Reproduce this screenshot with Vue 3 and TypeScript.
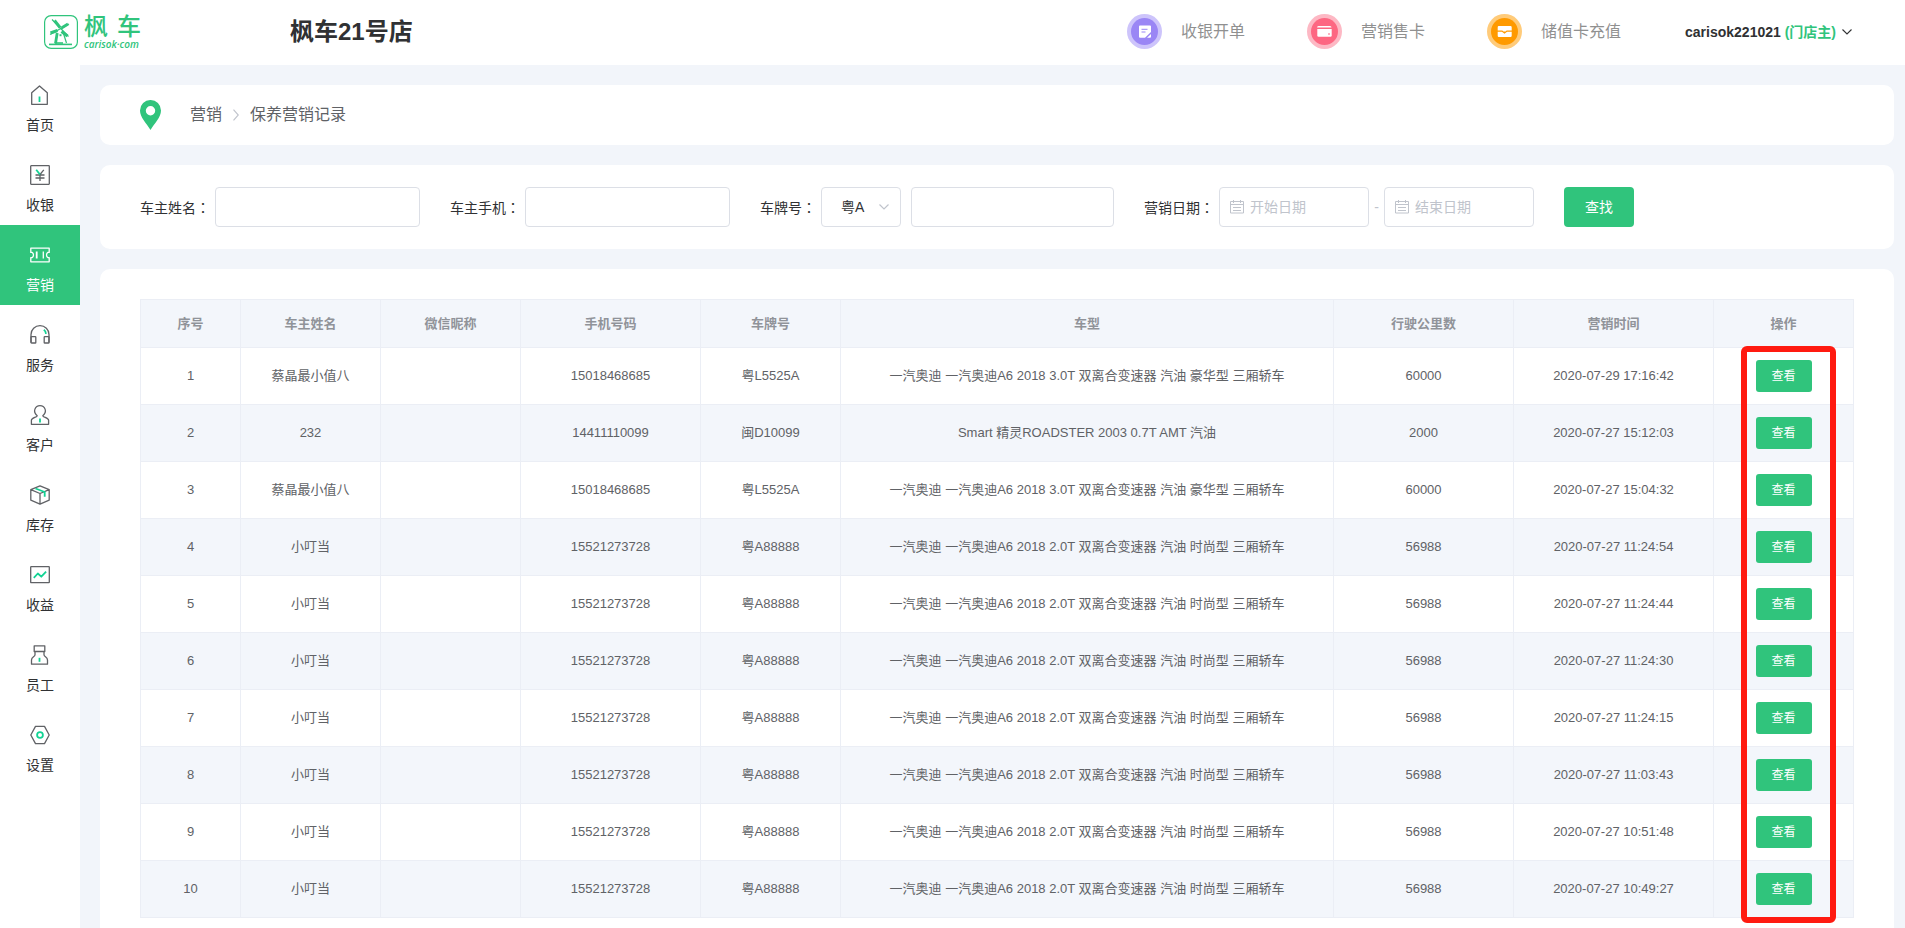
<script setup lang="ts">
import { ref } from 'vue'

interface NavItem {
  key: string
  label: string
}

interface RecordRow {
  owner: string
  nickname: string
  phone: string
  plate: string
  model: string
  mileage: string
  time: string
}

const navItems: NavItem[] = [
  { key: 'home', label: '首页' },
  { key: 'cashier', label: '收银' },
  { key: 'marketing', label: '营销' },
  { key: 'service', label: '服务' },
  { key: 'customer', label: '客户' },
  { key: 'stock', label: '库存' },
  { key: 'income', label: '收益' },
  { key: 'staff', label: '员工' },
  { key: 'settings', label: '设置' },
]
const activeNav = ref('marketing')

const columns: string[] = ['序号', '车主姓名', '微信昵称', '手机号码', '车牌号', '车型', '行驶公里数', '营销时间', '操作']

const luxury = '一汽奥迪 一汽奥迪A6 2018 3.0T 双离合变速器 汽油 豪华型 三厢轿车'
const fashion = '一汽奥迪 一汽奥迪A6 2018 2.0T 双离合变速器 汽油 时尚型 三厢轿车'

const row = (owner: string, phone: string, plate: string, model: string, mileage: string, time: string): RecordRow => ({
  owner,
  nickname: '',
  phone,
  plate,
  model,
  mileage,
  time,
})

const rows: RecordRow[] = [
  row('蔡晶最小值八', '15018468685', '粤L5525A', luxury, '60000', '2020-07-29 17:16:42'),
  row('232', '14411110099', '闽D10099', 'Smart 精灵ROADSTER 2003 0.7T AMT 汽油', '2000', '2020-07-27 15:12:03'),
  row('蔡晶最小值八', '15018468685', '粤L5525A', luxury, '60000', '2020-07-27 15:04:32'),
  ...['11:24:54', '11:24:44', '11:24:30', '11:24:15', '11:03:43', '10:51:48', '10:49:27'].map((t) =>
    row('小叮当', '15521273728', '粤A88888', fashion, '56988', `2020-07-27 ${t}`),
  ),
]

const ownerName = ref('')
const ownerPhone = ref('')
const platePrefix = ref('粤A')
const plateNumber = ref('')
const startDate = ref('')
const endDate = ref('')
</script>

<template>
  <div class="app">
    <header class="topbar">
      <a class="logo" href="#" aria-label="枫车">
        <svg class="logo-mark" viewBox="0 0 34 34" fill="none" stroke="#30c47c">
          <rect x="0.6" y="0.6" width="32.8" height="32.8" rx="6.5" stroke-width="1.2" />
          <path d="M8 4.500L24.500 21.500M6 19.500L25 9" stroke-width="1.200" />
          <path d="M10.500 5.500l5.500 7M17.500 13l6.500-4" stroke-width="3" />
          <path d="M6.500 18l7-2.500M17.500 16.500l6 4.500" stroke-width="3" />
          <path d="M13.200 18l-1.700 10.500" stroke-width="2.800" />
          <path d="M19.500 18.500l3 9.500" stroke-width="1.200" />
          <path d="M15.500 20.200h2" stroke-width="2" />
          <path d="M5 29.400h23" stroke-width="1.600" />
          <path d="M11 28h8" stroke-width="1.600" />
        </svg>
        <span class="logo-words">
          <span class="logo-cn"><span>枫</span><span>车</span></span>
          <span class="logo-en">carisok·com</span>
        </span>
      </a>
      <h1 class="store">枫车21号店</h1>

      <nav class="quick" aria-label="快捷操作">
        <a class="quick-link" href="#">
          <svg class="quick-icon" viewBox="0 0 35 35" fill="none">
            <circle cx="17.5" cy="17.5" r="17.5" fill="#cdc4fb" />
            <circle cx="17.5" cy="17.5" r="13.5" fill="#9a86f5" />
            <path d="M13 11.500h10a1 1 0 0 1 1 1v5.500l-6 5.800h-5a1 1 0 0 1-1-1v-10.300a1 1 0 0 1 1-1z" fill="#fff" />
            <path d="M24 20v2.800a1 1 0 0 1-1 1h-3z" fill="#fff" />
            <path d="M14.500 15.300h6M14.500 18h4" stroke="#9a86f5" stroke-width="1" />
          </svg>
          <span>收银开单</span>
        </a>
        <a class="quick-link" href="#">
          <svg class="quick-icon" viewBox="0 0 35 35" fill="none">
            <circle cx="17.5" cy="17.5" r="17.5" fill="#fdb8c4" />
            <circle cx="17.5" cy="17.5" r="13.5" fill="#fd6782" />
            <path d="M11.500 12h11.500a1.500 1.500 0 0 1 1.500 1.500h-14.500a1.500 1.500 0 0 1 1.500-1.500z" fill="#fff" />
            <path d="M10.300 15h14.400v6.500a1.200 1.200 0 0 1-1.200 1.200h-12a1.200 1.200 0 0 1-1.200-1.200z" fill="#fff" />
            <path d="M21 20h2" stroke="#fd6782" stroke-width="1.200" />
          </svg>
          <span>营销售卡</span>
        </a>
        <a class="quick-link" href="#">
          <svg class="quick-icon" viewBox="0 0 35 35" fill="none">
            <circle cx="17.5" cy="17.5" r="17.5" fill="#ffcb7a" />
            <circle cx="17.5" cy="17.5" r="13.5" fill="#ff9a00" />
            <path d="M12 12h11.500a1.200 1.200 0 0 1 1.200 1.200v3.200h-5l-1.200 1h-2l-1.200-1h-4.600v-3.200a1.200 1.200 0 0 1 1.300-1.200z" fill="#fff" />
            <path d="M10.700 17.800h4.300l2.500 2 2.500-2h4.700v3.900a1.200 1.200 0 0 1-1.200 1.200h-11.500a1.200 1.200 0 0 1-1.300-1.200z" fill="#fff" />
          </svg>
          <span>储值卡充值</span>
        </a>
      </nav>

      <button class="account" type="button">
        <span>carisok221021 <span class="role">(门店主)</span></span>
        <svg class="account-arrow" viewBox="0 0 10 6" fill="none">
          <path d="M0.500 0.500l4.500 4.500 4.500-4.500" stroke="#303133" stroke-width="1.100" />
        </svg>
      </button>
    </header>

    <div class="body">
      <nav class="sidebar" aria-label="主导航">
        <a
          v-for="item in navItems"
          :key="item.key"
          href="#"
          class="nav-item"
          :class="{ active: item.key === activeNav }"
          @click.prevent="activeNav = item.key"
        >
          <svg class="nav-icon" viewBox="0 0 20 20" fill="none" stroke="currentColor" stroke-width="1.300" stroke-linejoin="round">
            <template v-if="item.key === 'home'">
              <path d="M1.700 7.700L9.500 0.900l7.800 6.800v11.600H1.700z" />
              <path class="accent" d="M9.500 11.500v5.500" />
            </template>
            <template v-else-if="item.key === 'cashier'">
              <rect x="0.700" y="0.700" width="18.600" height="18.600" rx="0.500" />
              <path d="M10 9.500v6.500M5.500 10h9M5.500 13h9M10 9.500l3.800-4.700" />
              <path class="accent" d="M6.200 4.800l3.800 4.700" />
            </template>
            <template v-else-if="item.key === 'marketing'">
              <path d="M0.800 3.200h18.400v4.200h-1.200c-2 1-2 4.200 0 5.200h1.200v4.200H0.800v-4.200H2c2-1 2-4.200 0-5.200H0.800z" />
              <path d="M6.700 6.500v7" stroke-width="1.800" />
              <path d="M13.300 6.500v7" />
            </template>
            <template v-else-if="item.key === 'service'">
              <path d="M1 17.500V9.500a9 8.800 0 0 1 18 0v8" />
              <rect x="1" y="11.700" width="4.800" height="6.300" rx="0.600" />
              <rect x="14.200" y="11.700" width="4.800" height="6.300" rx="0.600" />
              <path class="accent" d="M13.800 4.800c1.300.8 2 2 2.200 4" />
            </template>
            <template v-else-if="item.key === 'customer'">
              <path d="M7.200 10.700c-5-4.200-2-10 2.800-10s7.800 5.800 2.800 10c0 1.700 5.800 2 5.800 4.600v4H1.400v-4c0-2.600 5.800-2.900 5.800-4.600z" />
              <path class="accent" d="M10 13.500v4" />
            </template>
            <template v-else-if="item.key === 'stock'">
              <path d="M10 0.900l9.200 3.700v10.600L10 19.100 0.800 15.200V4.600zM0.800 4.600L10 8.500l9.200-3.900M10 8.500v10.600" />
              <path class="accent" d="M5.500 3.500l9.200 3.500v4.800" />
            </template>
            <template v-else-if="item.key === 'income'">
              <rect x="0.700" y="1.700" width="18.600" height="16" rx="0.500" />
              <path class="accent" d="M3.800 12.800l4-4.300 3.500 3.200 4.800-5" />
            </template>
            <template v-else-if="item.key === 'staff'">
              <path d="M4.200 0.800h10.600v5.700H4.200z" />
              <path d="M5 6.500v3.300c0 2-3.500 2.200-3.500 5.200v4.200h16v-4.200c0-3-3.500-3.200-3.500-5.200V6.500" />
              <path class="accent" d="M9.500 12.800v4" />
            </template>
            <template v-else>
              <path d="M5.500 1.400h9L19.200 10l-4.700 8.600h-9L0.800 10z" />
              <circle class="accent" cx="10" cy="10" r="2.900" />
            </template>
          </svg>
          <span>{{ item.label }}</span>
        </a>
      </nav>

      <main class="content">
        <section class="card crumb">
          <svg class="pin" viewBox="0 0 21 30">
            <path d="M10.500 0A10.400 10.400 0 0 0 0 10.400C0 17.500 6.500 23 10.500 30 14.500 23 21 17.500 21 10.400A10.400 10.400 0 0 0 10.500 0zm0 6a4.700 4.700 0 1 1 0 9.400 4.700 4.700 0 0 1 0-9.400z" fill="#30c47c" fill-rule="evenodd" />
          </svg>
          <a href="#">营销</a>
          <svg class="crumb-arrow" viewBox="0 0 6 12" fill="none">
            <path d="M0.500 0.700L5.300 6 0.500 11.300" stroke="#c0c4cc" stroke-width="1.200" />
          </svg>
          <span>保养营销记录</span>
        </section>

        <form class="card filters" @submit.prevent>
          <div class="field">
            <label for="owner-name">车主姓名<span class="colon">：</span></label>
            <input id="owner-name" v-model="ownerName" class="box" type="text" />
          </div>
          <div class="field">
            <label for="owner-phone">车主手机<span class="colon">：</span></label>
            <input id="owner-phone" v-model="ownerPhone" class="box" type="text" />
          </div>
          <div class="field">
            <label for="plate-prefix">车牌号<span class="colon">：</span></label>
            <span class="select-wrap">
              <select id="plate-prefix" v-model="platePrefix" class="box">
                <option>粤A</option>
              </select>
              <svg class="select-arrow" viewBox="0 0 10 6" fill="none">
                <path d="M0.500 0.500l4.500 4.500 4.500-4.500" stroke="#c0c4cc" stroke-width="1.200" />
              </svg>
            </span>
            <input v-model="plateNumber" class="box plate" type="text" aria-label="车牌号码" />
          </div>
          <div class="field">
            <label for="start-date">营销日期<span class="colon">：</span></label>
            <span class="date box">
              <svg class="calendar" viewBox="0 0 14 14" fill="none" stroke="#c0c4cc">
                <path d="M0.500 1.500h13v11.500h-13zM0.500 4.500h13M3.500 0v3M10.500 0v3M3 7.500h8M3 10.500h8" />
              </svg>
              <input id="start-date" v-model="startDate" type="text" placeholder="开始日期" />
            </span>
            <span class="dash">-</span>
            <span class="date box">
              <svg class="calendar" viewBox="0 0 14 14" fill="none" stroke="#c0c4cc">
                <path d="M0.500 1.500h13v11.500h-13zM0.500 4.500h13M3.500 0v3M10.500 0v3M3 7.500h8M3 10.500h8" />
              </svg>
              <input v-model="endDate" type="text" placeholder="结束日期" aria-label="结束日期" />
            </span>
          </div>
          <button class="search" type="submit">查找</button>
        </form>

        <section class="card records">
          <div class="table-wrap">
            <table>
              <colgroup>
                <col class="w100" />
                <col class="w140" />
                <col class="w140" />
                <col class="w180" />
                <col class="w140" />
                <col />
                <col class="w180" />
                <col class="w200" />
                <col class="w140" />
              </colgroup>
              <thead>
                <tr>
                  <th v-for="c in columns" :key="c" scope="col">{{ c }}</th>
                </tr>
              </thead>
              <tbody>
                <tr v-for="(r, i) in rows" :key="i">
                  <td>{{ i + 1 }}</td>
                  <td>{{ r.owner }}</td>
                  <td>{{ r.nickname }}</td>
                  <td>{{ r.phone }}</td>
                  <td>{{ r.plate }}</td>
                  <td>{{ r.model }}</td>
                  <td>{{ r.mileage }}</td>
                  <td>{{ r.time }}</td>
                  <td><button class="view" type="button">查看</button></td>
                </tr>
              </tbody>
            </table>
            <div class="highlight" aria-hidden="true"></div>
          </div>
        </section>
      </main>
    </div>
  </div>
</template>

<style>
body {
  margin: 0;
}
</style>

<style scoped>
.app,
.app * {
  box-sizing: border-box;
}

.app {
  display: flex;
  flex-direction: column;
  height: 100vh;
  overflow: hidden;
  background: #f2f5fa;
  color: #303133;
  font-family: 'Liberation Sans', 'Noto Sans CJK SC', sans-serif;
  font-size: 14px;
  line-height: 20px;
}

a {
  color: inherit;
  text-decoration: none;
}

button,
input,
select {
  font: inherit;
}

svg {
  display: block;
  flex: none;
}

.topbar {
  display: flex;
  align-items: center;
  flex: none;
  height: 65px;
  padding: 0 53px 2px 44px;
  background: #fff;
}

.logo {
  display: flex;
  align-items: center;
  gap: 6px;
  width: 246px;
  color: #30c47c;
}

.logo-mark {
  width: 34px;
  height: 34px;
}

.logo-words {
  display: flex;
  flex-direction: column;
}

.logo-cn {
  display: flex;
  gap: 9px;
  font-size: 24px;
  font-weight: 500;
  line-height: 24px;
}

.logo-en {
  font-family: 'Open Sans', sans-serif;
  font-size: 10px;
  font-style: italic;
  font-weight: 600;
  line-height: 10px;
}

.store {
  margin: 0;
  font-size: 24px;
  font-weight: 700;
  line-height: 32px;
}

.quick {
  display: flex;
  gap: 62px;
  margin-left: auto;
}

.quick-link {
  display: flex;
  align-items: center;
  gap: 19px;
  color: #909090;
  font-size: 16px;
}

.quick-icon {
  width: 35px;
  height: 35px;
}

.account {
  display: flex;
  align-items: center;
  gap: 6px;
  margin-left: 64px;
  padding: 0;
  border: 0;
  background: none;
  color: #303133;
  font-weight: 700;
}

.role {
  color: #30c47c;
}

.account-arrow {
  width: 10px;
  height: 6px;
}

.body {
  display: flex;
  flex: 1;
  min-height: 0;
}

.sidebar {
  flex: none;
  width: 80px;
  background: #fff;
}

.nav-item {
  display: flex;
  flex-direction: column;
  align-items: center;
  gap: 10px;
  height: 80px;
  padding-top: 20px;
  color: #303133;
}

.nav-icon {
  width: 20px;
  height: 20px;
  color: #606266;
}

.accent {
  stroke: #12d394;
  stroke-width: 1.8;
}

.nav-item.active {
  background: #30c47c;
  color: #fff;
}

.nav-item.active .nav-icon {
  color: #fff;
}

.content {
  display: flex;
  flex: 1;
  flex-direction: column;
  gap: 20px;
  min-width: 0;
  padding: 20px 11px 20px 20px;
  overflow: auto;
  scrollbar-width: none;
}

.card {
  flex: none;
  border-radius: 10px;
  background: #fff;
}

.crumb {
  display: flex;
  align-items: center;
  height: 60px;
  padding: 0 40px;
  color: #606266;
  font-size: 16px;
}

.pin {
  width: 21px;
  height: 30px;
  margin-right: 29px;
}

.crumb-arrow {
  width: 6px;
  height: 12px;
  margin: 0 11px;
}

.filters {
  display: flex;
  flex-wrap: wrap;
  align-items: center;
  gap: 20px 30px;
  padding: 22px 40px;
}

.field {
  display: flex;
  align-items: center;
}

.field label {
  margin-right: 5px;
}

.colon {
  font-family: 'Noto Sans CJK TC', sans-serif;
}

.box {
  width: 205px;
  height: 40px;
  padding: 0 15px;
  border: 1px solid #dcdfe6;
  border-radius: 4px;
  outline: none;
  background: #fff;
  color: #303133;
}

.select-wrap {
  position: relative;
  margin-right: 10px;
}

select.box {
  display: block;
  width: 80px;
  padding: 0 19px;
  appearance: none;
}

.select-arrow {
  position: absolute;
  top: 17px;
  right: 12px;
  width: 10px;
  height: 6px;
  pointer-events: none;
}

.plate {
  width: 203px;
}

.date {
  display: flex;
  align-items: center;
  gap: 6px;
  width: 150px;
  padding: 0 10px;
}

.calendar {
  width: 14px;
  height: 14px;
}

.date input {
  flex: 1;
  width: 0;
  padding: 0;
  border: 0;
  outline: none;
  background: none;
}

.date input::placeholder {
  color: #c0c4cc;
  opacity: 1;
}

.dash {
  width: 15px;
  color: #c0c4cc;
  text-align: center;
}

.search {
  width: 70px;
  height: 40px;
  padding: 0;
  border: 0;
  border-radius: 4px;
  background: #30c47c;
  color: #fff;
}

.records {
  padding: 30px 40px 60px;
}

.table-wrap {
  position: relative;
}

table {
  width: 100%;
  border: solid #ebeef5;
  border-width: 1px 0 0 1px;
  border-collapse: separate;
  border-spacing: 0;
  table-layout: fixed;
  color: #606266;
  font-size: 13px;
}

.w100 {
  width: 100px;
}

.w140 {
  width: 140px;
}

.w180 {
  width: 180px;
}

.w200 {
  width: 200px;
}

th,
td {
  height: 57px;
  padding: 0 10px;
  border: solid #ebeef5;
  border-width: 0 1px 1px 0;
  text-align: center;
}

th {
  height: 48px;
  background: #f3f6fb;
  color: #909399;
  font-weight: 700;
}

tbody tr:nth-child(even) {
  background: #f3f6fb;
}

.view {
  display: block;
  width: 56px;
  height: 32px;
  margin: 0 auto;
  padding: 0;
  border: 0;
  border-radius: 3px;
  background: #30c47c;
  color: #fff;
  font-size: 12px;
}

/* Frame drawn around the whole action column */
.highlight {
  position: absolute;
  top: 47px;
  right: 18px;
  bottom: -5px;
  width: 95px;
  border: 6px solid #ff1a10;
  border-radius: 6px;
  pointer-events: none;
}
</style>
